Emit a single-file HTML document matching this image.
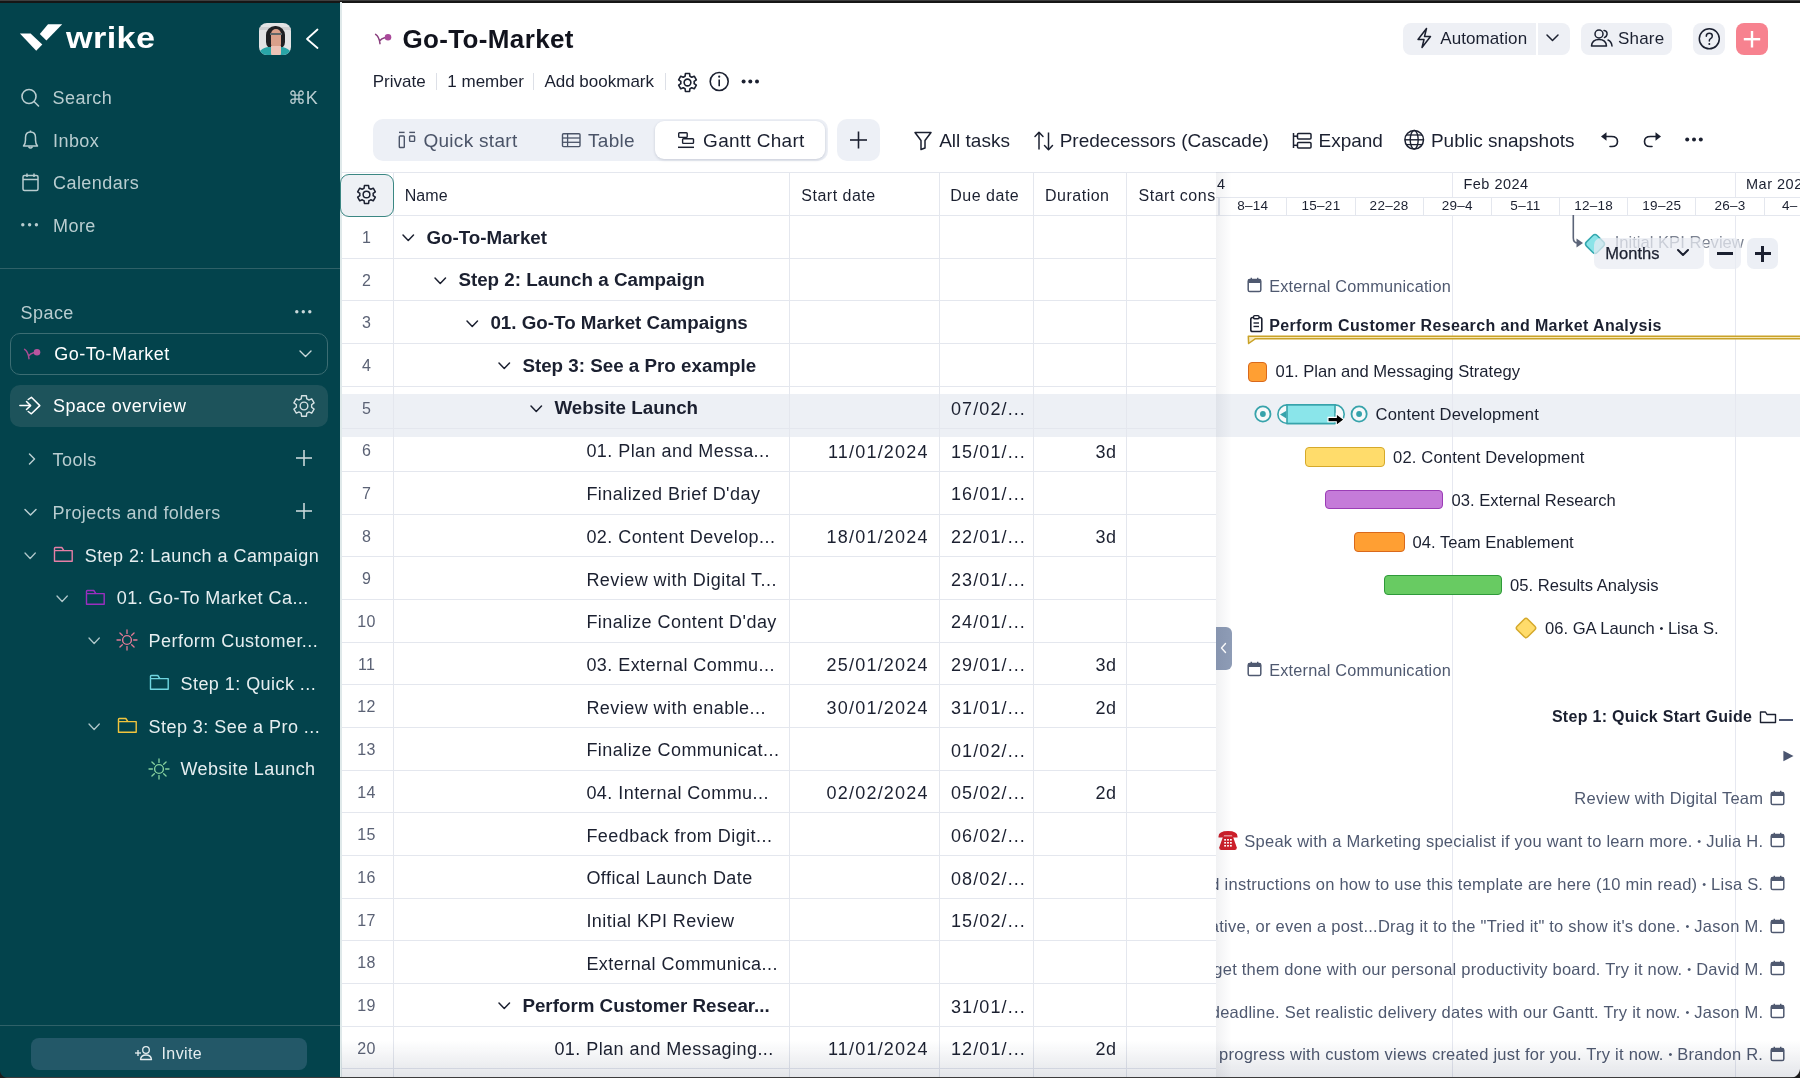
<!DOCTYPE html><html><head><meta charset="utf-8"><style>
html,body{margin:0;padding:0;width:1800px;height:1078px;overflow:hidden;background:#fff;font-family:"Liberation Sans",sans-serif;}
.t{position:absolute;white-space:nowrap;}
.r{position:absolute;}
svg.r{overflow:visible}
</style></head><body>
<div class="r" style="left:0px;top:0px;width:1800px;height:1078px;background:#ffffff;"></div>
<div class="r" style="left:0px;top:0px;width:340px;height:1078px;background:#03434c;"></div>
<div class="r" style="left:0px;top:0px;width:1800px;height:1px;background:#3f3f3f;"></div>
<div class="r" style="left:0px;top:1px;width:1800px;height:1.5px;background:#161616;"></div>
<svg class="r" style="left:0px;top:0px;" width="160" height="60" viewBox="0 0 160 60"><polygon points="19.9,33.5 30.6,33.5 42.3,44.5 36.2,50.8" fill="#fff"/>
<polygon points="39.8,34 48,24.3 62.2,24.3 46.4,40.6" fill="#fff"/></svg>
<div class="t " style="left:66.3px;top:23.75px;font-size:29px;line-height:29px;color:#ffffff;font-weight:700;letter-spacing:0.3px;transform:scaleX(1.18);transform-origin:0 0;">wrike</div>
<div class="r" style="left:259px;top:22.5px;width:32px;height:32.2px;border-radius:8px;overflow:hidden;background:#e3e3e4">
<div class="r" style="left:0;top:4px;width:32px;height:3px;background:#cfcfd1"></div>
<div class="r" style="left:6.5px;top:3px;width:19px;height:23px;border-radius:9px 9px 7px 7px;background:#1f1f22"></div>
<div class="r" style="left:12px;top:6.5px;width:9.5px;height:19px;border-radius:5px 5px 4px 4px;background:#d9a08a"></div>
<div class="r" style="left:11px;top:10.3px;width:11.5px;height:2.2px;background:#5f6668"></div>
<div class="r" style="left:-2px;top:24.5px;width:36px;height:12px;border-radius:12px 12px 0 0;background:#29a5a7"></div>
<div class="r" style="left:12px;top:23px;width:9.5px;height:10px;border-radius:0 0 3px 3px;background:#edc3b6"></div>
</div>
<svg class="r" style="left:300px;top:25px;" width="24" height="28" viewBox="0 0 24 28"><polyline points="17.5,4.5 7,14 17.5,23" fill="none" stroke="#fff" stroke-width="1.8" stroke-linecap="round" stroke-linejoin="round"/></svg>
<svg class="r" style="left:18px;top:86px;" width="24" height="24" viewBox="0 0 24 24"><circle cx="11" cy="10.5" r="7" fill="none" stroke="#b9cdd0" stroke-width="1.6"/><line x1="16" y1="15.5" x2="20.5" y2="20" stroke="#b9cdd0" stroke-width="1.6" stroke-linecap="round"/></svg>
<div class="t " style="left:52.5px;top:88.76px;font-size:18px;line-height:18px;color:#b9cdd0;letter-spacing:0.45px;">Search</div>
<div class="t " style="left:287.5px;top:88.76px;font-size:18px;line-height:18px;color:#b9cdd0;letter-spacing:0.2px;">&#8984;K</div>
<svg class="r" style="left:18px;top:128px;" width="24" height="24" viewBox="0 0 24 24"><path d="M5.5 18 Q7.5 16 7.5 12 L7.5 9.5 Q7.5 4 12.5 4 Q17.5 4 17.5 9.5 L17.5 12 Q17.5 16 19.5 18 Z" fill="none" stroke="#b9cdd0" stroke-width="1.5" stroke-linejoin="round"/><path d="M10.5 18.5 Q12.5 21.5 14.5 18.5" fill="none" stroke="#b9cdd0" stroke-width="1.5"/><line x1="12.5" y1="2.5" x2="12.5" y2="4" stroke="#b9cdd0" stroke-width="1.5"/></svg>
<div class="t " style="left:53px;top:131.76px;font-size:18px;line-height:18px;color:#b9cdd0;letter-spacing:0.45px;">Inbox</div>
<svg class="r" style="left:18px;top:170px;" width="24" height="24" viewBox="0 0 24 24"><rect x="5" y="5.5" width="15" height="15" rx="1.5" fill="none" stroke="#b9cdd0" stroke-width="1.5"/><line x1="5" y1="9.5" x2="20" y2="9.5" stroke="#b9cdd0" stroke-width="1.5"/><line x1="9" y1="3.5" x2="9" y2="7" stroke="#b9cdd0" stroke-width="1.5"/><line x1="16" y1="3.5" x2="16" y2="7" stroke="#b9cdd0" stroke-width="1.5"/></svg>
<div class="t " style="left:53px;top:174.36px;font-size:18px;line-height:18px;color:#b9cdd0;letter-spacing:0.45px;">Calendars</div>
<svg class="r" style="left:18px;top:213px;" width="24" height="24" viewBox="0 0 24 24"><circle cx="4.8" cy="11.7" r="1.7" fill="#b9cdd0"/><circle cx="11.6" cy="11.7" r="1.7" fill="#b9cdd0"/><circle cx="18.4" cy="11.7" r="1.7" fill="#b9cdd0"/></svg>
<div class="t " style="left:53px;top:216.76px;font-size:18px;line-height:18px;color:#b9cdd0;letter-spacing:0.45px;">More</div>
<div class="r" style="left:0px;top:268px;width:340px;height:1px;background:#2f6168;"></div>
<div class="t " style="left:20.5px;top:303.56px;font-size:18px;line-height:18px;color:#b9cdd0;letter-spacing:0.45px;">Space</div>
<svg class="r" style="left:290px;top:300px;" width="28" height="24" viewBox="0 0 28 24"><circle cx="6.8" cy="11.8" r="1.7" fill="#c9d8da"/><circle cx="13.3" cy="11.8" r="1.7" fill="#c9d8da"/><circle cx="19.8" cy="11.8" r="1.7" fill="#c9d8da"/></svg>
<div class="r" style="left:9.5px;top:332.5px;width:316px;height:40.5px;border:1px solid #3c6d73;border-radius:10px;"></div>
<svg class="r" style="left:21px;top:345px;" width="22" height="18" viewBox="0 0 22 18"><path d="M3.6 4.3 Q7.2 6.5 8 13.7 M7.8 10.8 Q9.5 8.6 12.6 7.8" fill="none" stroke="#a84d93" stroke-width="1.5" stroke-linecap="round"/><circle cx="16" cy="7.2" r="3.3" fill="#b9559f"/></svg>
<div class="t " style="left:54.3px;top:344.96px;font-size:18px;line-height:18px;color:#ffffff;letter-spacing:0.45px;">Go-To-Market</div>
<svg class="r" style="left:294px;top:344px;" width="24" height="20" viewBox="0 0 24 20"><polyline points="6,7 11.5,12.5 17,7" fill="none" stroke="#c9d8da" stroke-width="1.4" stroke-linecap="round" stroke-linejoin="round"/></svg>
<div class="r" style="left:9.5px;top:384.5px;width:318px;height:42px;background:#1d535b;border-radius:10px;"></div>
<svg class="r" style="left:14px;top:390px;" width="36" height="32" viewBox="0 0 36 32"><line x1="5.9" y1="15.6" x2="16.4" y2="15.6" stroke="#fff" stroke-width="1.5" stroke-linecap="round"/><polyline points="12.5,11.5 16.6,15.6 12.5,19.5" fill="none" stroke="#fff" stroke-width="1.5" stroke-linecap="round" stroke-linejoin="round"/><path d="M14.2 9.5 L17.4 7.3 L25.8 15.6 L17.4 23.8 L14.2 21.5" fill="none" stroke="#fff" stroke-width="1.5" stroke-linecap="round" stroke-linejoin="round"/></svg>
<div class="t " style="left:53px;top:397.06px;font-size:18px;line-height:18px;color:#ffffff;letter-spacing:0.45px;">Space overview</div>
<svg class="r" style="left:292px;top:394px;" width="24" height="24" viewBox="0 0 24 24"><path d="M9.25 4.83 L9.62 1.71 L14.38 1.71 L14.75 4.83 A7.68 7.68 0 0 1 16.83 6.03 L19.72 4.80 L22.10 8.91 L19.59 10.80 A7.68 7.68 0 0 1 19.59 13.20 L22.10 15.09 L19.72 19.20 L16.83 17.97 A7.68 7.68 0 0 1 14.75 19.17 L14.38 22.29 L9.62 22.29 L9.25 19.17 A7.68 7.68 0 0 1 7.17 17.97 L4.28 19.20 L1.90 15.09 L4.41 13.20 A7.68 7.68 0 0 1 4.41 10.80 L1.90 8.91 L4.28 4.80 L7.17 6.03 A7.68 7.68 0 0 1 9.25 4.83 Z" fill="none" stroke="#d5e1e3" stroke-width="1.4" stroke-linejoin="round"/><circle cx="12.0" cy="12.0" r="3.84" fill="none" stroke="#d5e1e3" stroke-width="1.4"/></svg>
<svg class="r" style="left:22px;top:449px;" width="20" height="20" viewBox="0 0 20 20"><polyline points="7.5,5 12.5,10 7.5,15" fill="none" stroke="#b9cdd0" stroke-width="1.5" stroke-linecap="round" stroke-linejoin="round"/></svg>
<div class="t " style="left:52.5px;top:450.76px;font-size:18px;line-height:18px;color:#b9cdd0;letter-spacing:0.45px;">Tools</div>
<svg class="r" style="left:291.5px;top:446px;" width="24" height="24" viewBox="0 0 24 24"><line x1="12" y1="4" x2="12" y2="20" stroke="#c9d8da" stroke-width="1.6"/><line x1="4" y1="12" x2="20" y2="12" stroke="#c9d8da" stroke-width="1.6"/></svg>
<svg class="r" style="left:20px;top:502px;" width="20" height="20" viewBox="0 0 20 20"><polyline points="5,7.5 10.5,13 16,7.5" fill="none" stroke="#b9cdd0" stroke-width="1.5" stroke-linecap="round" stroke-linejoin="round"/></svg>
<div class="t " style="left:52.5px;top:503.76px;font-size:18px;line-height:18px;color:#b9cdd0;letter-spacing:0.45px;">Projects and folders</div>
<svg class="r" style="left:291.5px;top:499px;" width="24" height="24" viewBox="0 0 24 24"><line x1="12" y1="4" x2="12" y2="20" stroke="#c9d8da" stroke-width="1.6"/><line x1="4" y1="12" x2="20" y2="12" stroke="#c9d8da" stroke-width="1.6"/></svg>
<svg class="r" style="left:24.3px;top:551.8px;" width="12.3" height="8" viewBox="0 0 12.3 8"><polyline points="1,1 6.15,6.5 11.3,1" fill="none" stroke="#b0c7ca" stroke-width="1.3" stroke-linecap="round" stroke-linejoin="round"/></svg>
<svg class="r" style="left:52.6px;top:546px;" width="22" height="18" viewBox="0 0 22 18"><path d="M1.5 4.6 L19.2 4.6 L19.2 15.2 L1.5 15.2 Z" fill="none" stroke="#e77fa6" stroke-width="1.4" stroke-linejoin="round"/><path d="M1.5 4.6 L1.5 2.3 Q1.5 1.5 2.3 1.5 L8.8 1.5 L10.9 4.6" fill="none" stroke="#e77fa6" stroke-width="1.4" stroke-linejoin="round"/></svg>
<div class="t " style="left:84.7px;top:546.76px;font-size:18px;line-height:18px;color:#e6eef0;letter-spacing:0.45px;">Step 2: Launch a Campaign</div>
<svg class="r" style="left:56.3px;top:594.5px;" width="12.3" height="8" viewBox="0 0 12.3 8"><polyline points="1,1 6.15,6.5 11.3,1" fill="none" stroke="#b0c7ca" stroke-width="1.3" stroke-linecap="round" stroke-linejoin="round"/></svg>
<svg class="r" style="left:85.2px;top:588.7px;" width="22" height="18" viewBox="0 0 22 18"><path d="M1.5 4.6 L19.2 4.6 L19.2 15.2 L1.5 15.2 Z" fill="none" stroke="#9b2fc0" stroke-width="1.4" stroke-linejoin="round"/><path d="M1.5 4.6 L1.5 2.3 Q1.5 1.5 2.3 1.5 L8.8 1.5 L10.9 4.6" fill="none" stroke="#9b2fc0" stroke-width="1.4" stroke-linejoin="round"/></svg>
<div class="t " style="left:116.8px;top:589.46px;font-size:18px;line-height:18px;color:#e6eef0;letter-spacing:0.45px;">01. Go-To Market Ca...</div>
<svg class="r" style="left:88.3px;top:637.1999999999999px;" width="12.3" height="8" viewBox="0 0 12.3 8"><polyline points="1,1 6.15,6.5 11.3,1" fill="none" stroke="#b0c7ca" stroke-width="1.3" stroke-linecap="round" stroke-linejoin="round"/></svg>
<svg class="r" style="left:115.8px;top:629.4px;" width="22" height="22" viewBox="0 0 22 22"><circle cx="11" cy="11" r="4.4" fill="none" stroke="#e27a95" stroke-width="1.4"/><line x1="17.60" y1="11.00" x2="21.00" y2="11.00" stroke="#e27a95" stroke-width="1.3" stroke-linecap="round"/><line x1="15.67" y1="15.67" x2="18.07" y2="18.07" stroke="#e27a95" stroke-width="1.3" stroke-linecap="round"/><line x1="11.00" y1="17.60" x2="11.00" y2="21.00" stroke="#e27a95" stroke-width="1.3" stroke-linecap="round"/><line x1="6.33" y1="15.67" x2="3.93" y2="18.07" stroke="#e27a95" stroke-width="1.3" stroke-linecap="round"/><line x1="4.40" y1="11.00" x2="1.00" y2="11.00" stroke="#e27a95" stroke-width="1.3" stroke-linecap="round"/><line x1="6.33" y1="6.33" x2="3.93" y2="3.93" stroke="#e27a95" stroke-width="1.3" stroke-linecap="round"/><line x1="11.00" y1="4.40" x2="11.00" y2="1.00" stroke="#e27a95" stroke-width="1.3" stroke-linecap="round"/><line x1="15.67" y1="6.33" x2="18.07" y2="3.93" stroke="#e27a95" stroke-width="1.3" stroke-linecap="round"/></svg>
<div class="t " style="left:148.6px;top:632.16px;font-size:18px;line-height:18px;color:#e6eef0;letter-spacing:0.45px;">Perform Customer...</div>
<svg class="r" style="left:149px;top:674.1px;" width="22" height="18" viewBox="0 0 22 18"><path d="M1.5 4.6 L19.2 4.6 L19.2 15.2 L1.5 15.2 Z" fill="none" stroke="#6fd6e0" stroke-width="1.4" stroke-linejoin="round"/><path d="M1.5 4.6 L1.5 2.3 Q1.5 1.5 2.3 1.5 L8.8 1.5 L10.9 4.6" fill="none" stroke="#6fd6e0" stroke-width="1.4" stroke-linejoin="round"/></svg>
<div class="t " style="left:180.5px;top:674.86px;font-size:18px;line-height:18px;color:#e6eef0;letter-spacing:0.45px;">Step 1: Quick ...</div>
<svg class="r" style="left:88.3px;top:722.5999999999999px;" width="12.3" height="8" viewBox="0 0 12.3 8"><polyline points="1,1 6.15,6.5 11.3,1" fill="none" stroke="#b0c7ca" stroke-width="1.3" stroke-linecap="round" stroke-linejoin="round"/></svg>
<svg class="r" style="left:117px;top:716.8px;" width="22" height="18" viewBox="0 0 22 18"><path d="M1.5 4.6 L19.2 4.6 L19.2 15.2 L1.5 15.2 Z" fill="none" stroke="#f2c53d" stroke-width="1.4" stroke-linejoin="round"/><path d="M1.5 4.6 L1.5 2.3 Q1.5 1.5 2.3 1.5 L8.8 1.5 L10.9 4.6" fill="none" stroke="#f2c53d" stroke-width="1.4" stroke-linejoin="round"/></svg>
<div class="t " style="left:148.6px;top:717.56px;font-size:18px;line-height:18px;color:#e6eef0;letter-spacing:0.45px;">Step 3: See a Pro ...</div>
<svg class="r" style="left:148px;top:757.5px;" width="22" height="22" viewBox="0 0 22 22"><circle cx="11" cy="11" r="4.4" fill="none" stroke="#86d19e" stroke-width="1.4"/><line x1="17.60" y1="11.00" x2="21.00" y2="11.00" stroke="#86d19e" stroke-width="1.3" stroke-linecap="round"/><line x1="15.67" y1="15.67" x2="18.07" y2="18.07" stroke="#86d19e" stroke-width="1.3" stroke-linecap="round"/><line x1="11.00" y1="17.60" x2="11.00" y2="21.00" stroke="#86d19e" stroke-width="1.3" stroke-linecap="round"/><line x1="6.33" y1="15.67" x2="3.93" y2="18.07" stroke="#86d19e" stroke-width="1.3" stroke-linecap="round"/><line x1="4.40" y1="11.00" x2="1.00" y2="11.00" stroke="#86d19e" stroke-width="1.3" stroke-linecap="round"/><line x1="6.33" y1="6.33" x2="3.93" y2="3.93" stroke="#86d19e" stroke-width="1.3" stroke-linecap="round"/><line x1="11.00" y1="4.40" x2="11.00" y2="1.00" stroke="#86d19e" stroke-width="1.3" stroke-linecap="round"/><line x1="15.67" y1="6.33" x2="18.07" y2="3.93" stroke="#86d19e" stroke-width="1.3" stroke-linecap="round"/></svg>
<div class="t " style="left:180.5px;top:760.26px;font-size:18px;line-height:18px;color:#e6eef0;letter-spacing:0.45px;">Website Launch</div>
<div class="r" style="left:0px;top:1025px;width:340px;height:1px;background:#2f6168;"></div>
<div class="r" style="left:30.5px;top:1038px;width:276.5px;height:31.5px;background:#235868;border-radius:8px;"></div>
<svg class="r" style="left:133px;top:1043px;" width="22" height="20" viewBox="0 0 22 20"><line x1="2" y1="10" x2="8" y2="10" stroke="#e6eef0" stroke-width="1.3"/><line x1="5" y1="7" x2="5" y2="13" stroke="#e6eef0" stroke-width="1.3"/><circle cx="13" cy="7" r="3.3" fill="none" stroke="#e6eef0" stroke-width="1.3"/><path d="M7.5 16.5 Q8 12 13 12 Q18 12 18.5 16.5 Z" fill="none" stroke="#e6eef0" stroke-width="1.3" stroke-linejoin="round"/></svg>
<div class="t " style="left:161.5px;top:1045.76px;font-size:16px;line-height:16px;color:#e6eef0;letter-spacing:0.4px;">Invite</div>
<svg class="r" style="left:372px;top:30px;" width="22" height="18" viewBox="0 0 22 18"><path d="M3.6 4.3 Q7.2 6.5 8 13.7 M7.8 10.8 Q9.5 8.6 12.6 7.8" fill="none" stroke="#8a3f7e" stroke-width="1.5" stroke-linecap="round"/><circle cx="16" cy="7.2" r="3.3" fill="#a9499a"/></svg>
<div class="t " style="left:402.5px;top:26.19px;font-size:26px;line-height:26px;color:#11131d;font-weight:700;letter-spacing:0.35px;">Go-To-Market</div>
<div class="t " style="left:372.7px;top:72.71px;font-size:17px;line-height:17px;color:#1b2030;">Private</div>
<div class="r" style="left:435.5px;top:73px;width:1px;height:16.5px;background:#dde0e7;"></div>
<div class="t " style="left:447.3px;top:72.71px;font-size:17px;line-height:17px;color:#1b2030;">1 member</div>
<div class="r" style="left:532.5px;top:73px;width:1px;height:16.5px;background:#dde0e7;"></div>
<div class="t " style="left:544.4px;top:72.71px;font-size:17px;line-height:17px;color:#1b2030;">Add bookmark</div>
<div class="r" style="left:664.5px;top:73px;width:1px;height:16.5px;background:#dde0e7;"></div>
<svg class="r" style="left:677px;top:71.5px;" width="21" height="21" viewBox="0 0 21 21"><path d="M8.09 4.23 L8.42 1.50 L12.58 1.50 L12.91 4.23 A6.72 6.72 0 0 1 14.73 5.28 L17.26 4.20 L19.34 7.80 L17.14 9.45 A6.72 6.72 0 0 1 17.14 11.55 L19.34 13.20 L17.26 16.80 L14.73 15.72 A6.72 6.72 0 0 1 12.91 16.77 L12.58 19.50 L8.42 19.50 L8.09 16.77 A6.72 6.72 0 0 1 6.27 15.72 L3.74 16.80 L1.66 13.20 L3.86 11.55 A6.72 6.72 0 0 1 3.86 9.45 L1.66 7.80 L3.74 4.20 L6.27 5.28 A6.72 6.72 0 0 1 8.09 4.23 Z" fill="none" stroke="#1b2030" stroke-width="1.6" stroke-linejoin="round"/><circle cx="10.5" cy="10.5" r="3.36" fill="none" stroke="#1b2030" stroke-width="1.6"/></svg>
<svg class="r" style="left:708px;top:70px;" width="23" height="23" viewBox="0 0 23 23"><circle cx="11.2" cy="11.5" r="9" fill="none" stroke="#1b2030" stroke-width="1.6"/><line x1="11.2" y1="9.5" x2="11.2" y2="16.2" stroke="#1b2030" stroke-width="1.6"/><circle cx="11.2" cy="6.7" r="1.1" fill="#1b2030"/></svg>
<svg class="r" style="left:739px;top:72px;" width="24" height="20" viewBox="0 0 24 20"><circle cx="4.6" cy="9.5" r="2" fill="#1b2030"/><circle cx="11.3" cy="9.5" r="2" fill="#1b2030"/><circle cx="18" cy="9.5" r="2" fill="#1b2030"/></svg>
<div class="r" style="left:1402.5px;top:22.5px;width:167px;height:32.5px;background:#eef0f5;border-radius:8px;"></div>
<div class="r" style="left:1536px;top:22.5px;width:2px;height:32.5px;background:#ffffff;"></div>
<svg class="r" style="left:1413px;top:26px;" width="22" height="24" viewBox="0 0 22 24"><path d="M13.5 2.5 L5 13.5 L11 13.5 L9 21.5 L17.5 10.5 L11.5 10.5 Z" fill="none" stroke="#1b2030" stroke-width="1.5" stroke-linejoin="round"/></svg>
<div class="t " style="left:1440.2px;top:29.91px;font-size:17px;line-height:17px;color:#1b2030;letter-spacing:0.1px;">Automation</div>
<svg class="r" style="left:1545px;top:33px;" width="16" height="10" viewBox="0 0 16 10"><polyline points="2,2 7.5,7.5 13,2" fill="none" stroke="#1b2030" stroke-width="1.5" stroke-linecap="round" stroke-linejoin="round"/></svg>
<div class="r" style="left:1580.5px;top:22.5px;width:91px;height:32.5px;background:#eef0f5;border-radius:8px;"></div>
<svg class="r" style="left:1589px;top:27px;" width="26" height="22" viewBox="0 0 26 22"><circle cx="10" cy="7" r="4" fill="none" stroke="#1b2030" stroke-width="1.5"/><path d="M2.5 19 Q3 12.5 10 12.5 Q17 12.5 17.5 19 Z" fill="none" stroke="#1b2030" stroke-width="1.5" stroke-linejoin="round"/><path d="M15 3.5 Q18.5 4 18 7.5 Q17.5 10 15.5 10.5 M19 13 Q22.5 14.5 23 19" fill="none" stroke="#1b2030" stroke-width="1.5" stroke-linecap="round"/></svg>
<div class="t " style="left:1618px;top:29.91px;font-size:17px;line-height:17px;color:#1b2030;letter-spacing:0.2px;">Share</div>
<div class="r" style="left:1693px;top:22.5px;width:32px;height:32.5px;background:#eef0f5;border-radius:8px;"></div>
<svg class="r" style="left:1697px;top:27px;" width="24" height="24" viewBox="0 0 24 24"><circle cx="12.3" cy="11.8" r="10" fill="none" stroke="#1b2030" stroke-width="1.5"/><path d="M9.3 9.3 Q9.3 6.3 12.3 6.3 Q15.3 6.3 15.3 9 Q15.3 10.8 13.3 11.8 Q12.3 12.4 12.3 14" fill="none" stroke="#1b2030" stroke-width="1.5" stroke-linecap="round"/><circle cx="12.3" cy="17" r="1" fill="#1b2030"/></svg>
<div class="r" style="left:1736px;top:22.5px;width:32px;height:32.5px;background:#f7828f;border-radius:8px;"></div>
<svg class="r" style="left:1736px;top:22.5px;" width="32" height="32.5" viewBox="0 0 32 32.5"><line x1="16" y1="8" x2="16" y2="24.5" stroke="#fff" stroke-width="2.4"/><line x1="7.8" y1="16.2" x2="24.2" y2="16.2" stroke="#fff" stroke-width="2.4"/></svg>
<div class="r" style="left:373px;top:119px;width:455px;height:42px;background:#edf0f6;border-radius:10px;"></div>
<div class="r" style="left:655px;top:121.3px;width:170px;height:37.5px;background:#ffffff;border-radius:9px;box-shadow:0 1px 3px rgba(30,40,70,0.18);"></div>
<svg class="r" style="left:396px;top:129px;" width="22" height="22" viewBox="0 0 22 22"><line x1="3" y1="3.4" x2="8.6" y2="3.4" stroke="#4b5468" stroke-width="1.4"/><line x1="13.3" y1="3.4" x2="19" y2="3.4" stroke="#4b5468" stroke-width="1.4"/><rect x="3.3" y="7" width="5" height="11.5" rx="0.8" fill="none" stroke="#4b5468" stroke-width="1.4"/><rect x="13.6" y="7" width="5" height="5.4" rx="0.8" fill="none" stroke="#4b5468" stroke-width="1.4"/></svg>
<div class="t " style="left:423.4px;top:131.12px;font-size:19px;line-height:19px;color:#4b5468;letter-spacing:0.3px;">Quick start</div>
<svg class="r" style="left:560px;top:131px;" width="22" height="18" viewBox="0 0 22 18"><rect x="2.5" y="2.8" width="17.5" height="12.8" rx="1" fill="none" stroke="#4b5468" stroke-width="1.4"/><line x1="2.5" y1="7" x2="20" y2="7" stroke="#4b5468" stroke-width="1.3"/><line x1="2.5" y1="11.3" x2="20" y2="11.3" stroke="#4b5468" stroke-width="1.3"/><line x1="7.6" y1="2.8" x2="7.6" y2="15.6" stroke="#4b5468" stroke-width="1.3"/></svg>
<div class="t " style="left:588px;top:131.12px;font-size:19px;line-height:19px;color:#4b5468;letter-spacing:0.3px;">Table</div>
<svg class="r" style="left:676px;top:130px;" width="20" height="20" viewBox="0 0 20 20"><rect x="2.7" y="2.8" width="8.5" height="4.6" rx="0.8" fill="none" stroke="#1b2030" stroke-width="1.4"/><rect x="6.6" y="8.8" width="10.9" height="4.6" rx="0.8" fill="none" stroke="#1b2030" stroke-width="1.4"/><line x1="2" y1="17.3" x2="18" y2="17.3" stroke="#1b2030" stroke-width="1.5"/></svg>
<div class="t " style="left:703.1px;top:131.12px;font-size:19px;line-height:19px;color:#1b2030;letter-spacing:0.3px;">Gantt Chart</div>
<div class="r" style="left:837px;top:119px;width:43px;height:42px;background:#edf0f6;border-radius:10px;"></div>
<svg class="r" style="left:837px;top:119px;" width="43" height="42" viewBox="0 0 43 42"><line x1="21.5" y1="12.5" x2="21.5" y2="29.5" stroke="#1b2030" stroke-width="1.6"/><line x1="13" y1="21" x2="30" y2="21" stroke="#1b2030" stroke-width="1.6"/></svg>
<svg class="r" style="left:912px;top:130px;" width="22" height="22" viewBox="0 0 22 22"><path d="M3 2.5 L19 2.5 L13 10.5 L13 18 L9 19.5 L9 10.5 Z" fill="none" stroke="#1b2030" stroke-width="1.5" stroke-linejoin="round"/></svg>
<div class="t " style="left:939.2px;top:130.92px;font-size:19px;line-height:19px;color:#1b2030;">All tasks</div>
<svg class="r" style="left:1032px;top:129px;" width="24" height="24" viewBox="0 0 24 24"><line x1="7" y1="3.5" x2="7" y2="20.5" stroke="#1b2030" stroke-width="1.5"/><polyline points="3,7.5 7,3.3 11,7.5" fill="none" stroke="#1b2030" stroke-width="1.5" stroke-linejoin="round" stroke-linecap="round"/><line x1="16.5" y1="3.5" x2="16.5" y2="20.5" stroke="#1b2030" stroke-width="1.5"/><polyline points="12.5,16.5 16.5,20.7 20.5,16.5" fill="none" stroke="#1b2030" stroke-width="1.5" stroke-linejoin="round" stroke-linecap="round"/></svg>
<div class="t " style="left:1059.7px;top:130.92px;font-size:19px;line-height:19px;color:#1b2030;">Predecessors (Cascade)</div>
<svg class="r" style="left:1290px;top:129px;" width="24" height="24" viewBox="0 0 24 24"><line x1="3.5" y1="4" x2="3.5" y2="19" stroke="#1b2030" stroke-width="1.5"/><rect x="7.5" y="4.5" width="13.5" height="5.5" rx="1" fill="none" stroke="#1b2030" stroke-width="1.5"/><rect x="7.5" y="13.5" width="13.5" height="5.5" rx="1" fill="none" stroke="#1b2030" stroke-width="1.5"/><line x1="3.5" y1="7.2" x2="7.5" y2="7.2" stroke="#1b2030" stroke-width="1.5"/><line x1="3.5" y1="16.3" x2="7.5" y2="16.3" stroke="#1b2030" stroke-width="1.5"/></svg>
<div class="t " style="left:1318.5px;top:130.92px;font-size:19px;line-height:19px;color:#1b2030;">Expand</div>
<svg class="r" style="left:1402px;top:128px;" width="24" height="24" viewBox="0 0 24 24"><circle cx="12.2" cy="11.8" r="9.3" fill="none" stroke="#1b2030" stroke-width="1.5"/><ellipse cx="12.2" cy="11.8" rx="4" ry="9.3" fill="none" stroke="#1b2030" stroke-width="1.4"/><line x1="2.9" y1="11.8" x2="21.5" y2="11.8" stroke="#1b2030" stroke-width="1.4"/><line x1="4.2" y1="7" x2="20.2" y2="7" stroke="#1b2030" stroke-width="1.3"/><line x1="4.2" y1="16.6" x2="20.2" y2="16.6" stroke="#1b2030" stroke-width="1.3"/></svg>
<div class="t " style="left:1430.9px;top:130.92px;font-size:19px;line-height:19px;color:#1b2030;">Public snapshots</div>
<svg class="r" style="left:1598px;top:128px;" width="24" height="24" viewBox="0 0 24 24"><path d="M7 8.5 L13.5 8.5 Q19.5 8.5 19.5 13.5 Q19.5 18.5 14 18.5 L12 18.5" fill="none" stroke="#1b2030" stroke-width="1.6" stroke-linecap="round"/><polygon points="3,8.5 8.5,4.3 8.5,12.7" fill="#1b2030"/></svg>
<svg class="r" style="left:1640px;top:128px;" width="24" height="24" viewBox="0 0 24 24"><path d="M17 8.5 L10.5 8.5 Q4.5 8.5 4.5 13.5 Q4.5 18.5 10 18.5 L12 18.5" fill="none" stroke="#1b2030" stroke-width="1.6" stroke-linecap="round"/><polygon points="21,8.5 15.5,4.3 15.5,12.7" fill="#1b2030"/></svg>
<svg class="r" style="left:1683px;top:128px;" width="24" height="24" viewBox="0 0 24 24"><circle cx="4.2" cy="11.5" r="2" fill="#1b2030"/><circle cx="11" cy="11.5" r="2" fill="#1b2030"/><circle cx="17.8" cy="11.5" r="2" fill="#1b2030"/></svg>
<div class="r" style="left:340px;top:393.5px;width:1460px;height:43.2px;background:#edf0f5;"></div>
<div class="r" style="left:340px;top:172px;width:1460px;height:1px;background:#e4e7ee;"></div>
<div class="r" style="left:340px;top:215px;width:876px;height:1px;background:#e4e7ee;"></div>
<div class="r" style="left:340px;top:258px;width:876px;height:1px;background:#e4e7ee;"></div>
<div class="r" style="left:340px;top:300px;width:876px;height:1px;background:#e4e7ee;"></div>
<div class="r" style="left:340px;top:343px;width:876px;height:1px;background:#e4e7ee;"></div>
<div class="r" style="left:340px;top:386px;width:876px;height:1px;background:#e4e7ee;"></div>
<div class="r" style="left:340px;top:428px;width:876px;height:1px;background:#e4e7ee;"></div>
<div class="r" style="left:340px;top:471px;width:876px;height:1px;background:#e4e7ee;"></div>
<div class="r" style="left:340px;top:514px;width:876px;height:1px;background:#e4e7ee;"></div>
<div class="r" style="left:340px;top:556px;width:876px;height:1px;background:#e4e7ee;"></div>
<div class="r" style="left:340px;top:599px;width:876px;height:1px;background:#e4e7ee;"></div>
<div class="r" style="left:340px;top:642px;width:876px;height:1px;background:#e4e7ee;"></div>
<div class="r" style="left:340px;top:684px;width:876px;height:1px;background:#e4e7ee;"></div>
<div class="r" style="left:340px;top:727px;width:876px;height:1px;background:#e4e7ee;"></div>
<div class="r" style="left:340px;top:770px;width:876px;height:1px;background:#e4e7ee;"></div>
<div class="r" style="left:340px;top:812px;width:876px;height:1px;background:#e4e7ee;"></div>
<div class="r" style="left:340px;top:855px;width:876px;height:1px;background:#e4e7ee;"></div>
<div class="r" style="left:340px;top:898px;width:876px;height:1px;background:#e4e7ee;"></div>
<div class="r" style="left:340px;top:940px;width:876px;height:1px;background:#e4e7ee;"></div>
<div class="r" style="left:340px;top:983px;width:876px;height:1px;background:#e4e7ee;"></div>
<div class="r" style="left:340px;top:1026px;width:876px;height:1px;background:#e4e7ee;"></div>
<div class="r" style="left:340px;top:1068px;width:876px;height:1px;background:#e4e7ee;"></div>
<div class="r" style="left:392.5px;top:172px;width:1px;height:906px;background:#e4e7ee;"></div>
<div class="r" style="left:789px;top:172px;width:1px;height:906px;background:#e4e7ee;"></div>
<div class="r" style="left:938.5px;top:172px;width:1px;height:906px;background:#e4e7ee;"></div>
<div class="r" style="left:1033px;top:172px;width:1px;height:906px;background:#e4e7ee;"></div>
<div class="r" style="left:1126px;top:172px;width:1px;height:906px;background:#e4e7ee;"></div>
<div class="r" style="left:340px;top:2px;width:1.5px;height:1076px;background:#dfe9ea;"></div>
<div class="r" style="left:340px;top:173.5px;width:52px;height:41px;border:1px solid #3b8783;border-radius:9px;background:#eef1f5;"></div>
<svg class="r" style="left:356px;top:184px;" width="21" height="21" viewBox="0 0 21 21"><path d="M8.09 4.23 L8.42 1.50 L12.58 1.50 L12.91 4.23 A6.72 6.72 0 0 1 14.73 5.28 L17.26 4.20 L19.34 7.80 L17.14 9.45 A6.72 6.72 0 0 1 17.14 11.55 L19.34 13.20 L17.26 16.80 L14.73 15.72 A6.72 6.72 0 0 1 12.91 16.77 L12.58 19.50 L8.42 19.50 L8.09 16.77 A6.72 6.72 0 0 1 6.27 15.72 L3.74 16.80 L1.66 13.20 L3.86 11.55 A6.72 6.72 0 0 1 3.86 9.45 L1.66 7.80 L3.74 4.20 L6.27 5.28 A6.72 6.72 0 0 1 8.09 4.23 Z" fill="none" stroke="#1b2030" stroke-width="1.5" stroke-linejoin="round"/><circle cx="10.5" cy="10.5" r="3.36" fill="none" stroke="#1b2030" stroke-width="1.5"/></svg>
<div class="t " style="left:404.7px;top:187.76px;font-size:16px;line-height:16px;color:#1b2030;letter-spacing:0.1px;">Name</div>
<div class="t " style="left:801.3px;top:187.76px;font-size:16px;line-height:16px;color:#1b2030;letter-spacing:0.5px;">Start date</div>
<div class="t " style="left:950.3px;top:187.76px;font-size:16px;line-height:16px;color:#1b2030;letter-spacing:0.5px;">Due date</div>
<div class="t " style="left:1045px;top:187.76px;font-size:16px;line-height:16px;color:#1b2030;letter-spacing:0.5px;">Duration</div>
<div class="r" style="left:1127px;top:173px;width:89px;height:42px;overflow:hidden">
<div class="t " style="left:11.6px;top:14.76px;font-size:16px;line-height:16px;color:#1b2030;letter-spacing:0.5px;">Start constraint</div>
</div>
<div class="t" style="left:340px;width:53px;text-align:center;top:229.89px;font-size:16px;line-height:16px;color:#5b6275;letter-spacing:0.3px">1</div>
<svg class="r" style="left:402.1px;top:234.3375px;" width="12.5" height="8" viewBox="0 0 12.5 8"><polyline points="1,1 6.25,6.5 11.5,1" fill="none" stroke="#1b2030" stroke-width="1.5" stroke-linecap="round" stroke-linejoin="round"/></svg>
<div class="t " style="left:426.4px;top:228.72px;font-size:18.8px;line-height:18.8px;color:#1b2030;font-weight:700;">Go-To-Market</div>
<div class="t" style="left:340px;width:53px;text-align:center;top:272.57px;font-size:16px;line-height:16px;color:#5b6275;letter-spacing:0.3px">2</div>
<svg class="r" style="left:434.1px;top:277.0125px;" width="12.5" height="8" viewBox="0 0 12.5 8"><polyline points="1,1 6.25,6.5 11.5,1" fill="none" stroke="#1b2030" stroke-width="1.5" stroke-linecap="round" stroke-linejoin="round"/></svg>
<div class="t " style="left:458.4px;top:271.40px;font-size:18.8px;line-height:18.8px;color:#1b2030;font-weight:700;">Step 2: Launch a Campaign</div>
<div class="t" style="left:340px;width:53px;text-align:center;top:315.24px;font-size:16px;line-height:16px;color:#5b6275;letter-spacing:0.3px">3</div>
<svg class="r" style="left:466.1px;top:319.6875px;" width="12.5" height="8" viewBox="0 0 12.5 8"><polyline points="1,1 6.25,6.5 11.5,1" fill="none" stroke="#1b2030" stroke-width="1.5" stroke-linecap="round" stroke-linejoin="round"/></svg>
<div class="t " style="left:490.4px;top:314.07px;font-size:18.8px;line-height:18.8px;color:#1b2030;font-weight:700;">01. Go-To Market Campaigns</div>
<div class="t" style="left:340px;width:53px;text-align:center;top:357.92px;font-size:16px;line-height:16px;color:#5b6275;letter-spacing:0.3px">4</div>
<svg class="r" style="left:498.1px;top:362.36249999999995px;" width="12.5" height="8" viewBox="0 0 12.5 8"><polyline points="1,1 6.25,6.5 11.5,1" fill="none" stroke="#1b2030" stroke-width="1.5" stroke-linecap="round" stroke-linejoin="round"/></svg>
<div class="t " style="left:522.4px;top:356.75px;font-size:18.8px;line-height:18.8px;color:#1b2030;font-weight:700;">Step 3: See a Pro example</div>
<div class="t" style="left:340px;width:53px;text-align:center;top:400.59px;font-size:16px;line-height:16px;color:#5b6275;letter-spacing:0.3px">5</div>
<svg class="r" style="left:530.1px;top:405.0375px;" width="12.5" height="8" viewBox="0 0 12.5 8"><polyline points="1,1 6.25,6.5 11.5,1" fill="none" stroke="#1b2030" stroke-width="1.5" stroke-linecap="round" stroke-linejoin="round"/></svg>
<div class="t " style="left:554.4px;top:399.42px;font-size:18.8px;line-height:18.8px;color:#1b2030;font-weight:700;">Website Launch</div>
<div class="t " style="left:951px;top:400.10px;font-size:18px;line-height:18px;color:#1b2030;letter-spacing:1.1px;">07/02/...</div>
<div class="t" style="left:340px;width:53px;text-align:center;top:443.27px;font-size:16px;line-height:16px;color:#5b6275;letter-spacing:0.3px">6</div>
<div class="t " style="left:586.4px;top:442.48px;font-size:18px;line-height:18px;color:#1b2030;letter-spacing:0.45px;">01. Plan and Messa...</div>
<div class="t " style="right:871.3px;top:442.78px;font-size:18px;line-height:18px;color:#1b2030;letter-spacing:1.2px;">11/01/2024</div>
<div class="t " style="left:951px;top:442.78px;font-size:18px;line-height:18px;color:#1b2030;letter-spacing:1.1px;">15/01/...</div>
<div class="t " style="right:683.5px;top:442.78px;font-size:18px;line-height:18px;color:#1b2030;letter-spacing:0.5px;">3d</div>
<div class="t" style="left:340px;width:53px;text-align:center;top:485.94px;font-size:16px;line-height:16px;color:#5b6275;letter-spacing:0.3px">7</div>
<div class="t " style="left:586.4px;top:485.15px;font-size:18px;line-height:18px;color:#1b2030;letter-spacing:0.45px;">Finalized Brief D'day</div>
<div class="t " style="left:951px;top:485.45px;font-size:18px;line-height:18px;color:#1b2030;letter-spacing:1.1px;">16/01/...</div>
<div class="t" style="left:340px;width:53px;text-align:center;top:528.62px;font-size:16px;line-height:16px;color:#5b6275;letter-spacing:0.3px">8</div>
<div class="t " style="left:586.4px;top:527.83px;font-size:18px;line-height:18px;color:#1b2030;letter-spacing:0.45px;">02. Content Develop...</div>
<div class="t " style="right:871.3px;top:528.13px;font-size:18px;line-height:18px;color:#1b2030;letter-spacing:1.2px;">18/01/2024</div>
<div class="t " style="left:951px;top:528.13px;font-size:18px;line-height:18px;color:#1b2030;letter-spacing:1.1px;">22/01/...</div>
<div class="t " style="right:683.5px;top:528.13px;font-size:18px;line-height:18px;color:#1b2030;letter-spacing:0.5px;">3d</div>
<div class="t" style="left:340px;width:53px;text-align:center;top:571.29px;font-size:16px;line-height:16px;color:#5b6275;letter-spacing:0.3px">9</div>
<div class="t " style="left:586.4px;top:570.50px;font-size:18px;line-height:18px;color:#1b2030;letter-spacing:0.45px;">Review with Digital T...</div>
<div class="t " style="left:951px;top:570.80px;font-size:18px;line-height:18px;color:#1b2030;letter-spacing:1.1px;">23/01/...</div>
<div class="t" style="left:340px;width:53px;text-align:center;top:613.97px;font-size:16px;line-height:16px;color:#5b6275;letter-spacing:0.3px">10</div>
<div class="t " style="left:586.4px;top:613.18px;font-size:18px;line-height:18px;color:#1b2030;letter-spacing:0.45px;">Finalize Content D'day</div>
<div class="t " style="left:951px;top:613.48px;font-size:18px;line-height:18px;color:#1b2030;letter-spacing:1.1px;">24/01/...</div>
<div class="t" style="left:340px;width:53px;text-align:center;top:656.64px;font-size:16px;line-height:16px;color:#5b6275;letter-spacing:0.3px">11</div>
<div class="t " style="left:586.4px;top:655.85px;font-size:18px;line-height:18px;color:#1b2030;letter-spacing:0.45px;">03. External Commu...</div>
<div class="t " style="right:871.3px;top:656.15px;font-size:18px;line-height:18px;color:#1b2030;letter-spacing:1.2px;">25/01/2024</div>
<div class="t " style="left:951px;top:656.15px;font-size:18px;line-height:18px;color:#1b2030;letter-spacing:1.1px;">29/01/...</div>
<div class="t " style="right:683.5px;top:656.15px;font-size:18px;line-height:18px;color:#1b2030;letter-spacing:0.5px;">3d</div>
<div class="t" style="left:340px;width:53px;text-align:center;top:699.32px;font-size:16px;line-height:16px;color:#5b6275;letter-spacing:0.3px">12</div>
<div class="t " style="left:586.4px;top:698.53px;font-size:18px;line-height:18px;color:#1b2030;letter-spacing:0.45px;">Review with enable...</div>
<div class="t " style="right:871.3px;top:698.83px;font-size:18px;line-height:18px;color:#1b2030;letter-spacing:1.2px;">30/01/2024</div>
<div class="t " style="left:951px;top:698.83px;font-size:18px;line-height:18px;color:#1b2030;letter-spacing:1.1px;">31/01/...</div>
<div class="t " style="right:683.5px;top:698.83px;font-size:18px;line-height:18px;color:#1b2030;letter-spacing:0.5px;">2d</div>
<div class="t" style="left:340px;width:53px;text-align:center;top:741.99px;font-size:16px;line-height:16px;color:#5b6275;letter-spacing:0.3px">13</div>
<div class="t " style="left:586.4px;top:741.20px;font-size:18px;line-height:18px;color:#1b2030;letter-spacing:0.45px;">Finalize Communicat...</div>
<div class="t " style="left:951px;top:741.50px;font-size:18px;line-height:18px;color:#1b2030;letter-spacing:1.1px;">01/02/...</div>
<div class="t" style="left:340px;width:53px;text-align:center;top:784.67px;font-size:16px;line-height:16px;color:#5b6275;letter-spacing:0.3px">14</div>
<div class="t " style="left:586.4px;top:783.88px;font-size:18px;line-height:18px;color:#1b2030;letter-spacing:0.45px;">04. Internal Commu...</div>
<div class="t " style="right:871.3px;top:784.18px;font-size:18px;line-height:18px;color:#1b2030;letter-spacing:1.2px;">02/02/2024</div>
<div class="t " style="left:951px;top:784.18px;font-size:18px;line-height:18px;color:#1b2030;letter-spacing:1.1px;">05/02/...</div>
<div class="t " style="right:683.5px;top:784.18px;font-size:18px;line-height:18px;color:#1b2030;letter-spacing:0.5px;">2d</div>
<div class="t" style="left:340px;width:53px;text-align:center;top:827.34px;font-size:16px;line-height:16px;color:#5b6275;letter-spacing:0.3px">15</div>
<div class="t " style="left:586.4px;top:826.55px;font-size:18px;line-height:18px;color:#1b2030;letter-spacing:0.45px;">Feedback from Digit...</div>
<div class="t " style="left:951px;top:826.85px;font-size:18px;line-height:18px;color:#1b2030;letter-spacing:1.1px;">06/02/...</div>
<div class="t" style="left:340px;width:53px;text-align:center;top:870.02px;font-size:16px;line-height:16px;color:#5b6275;letter-spacing:0.3px">16</div>
<div class="t " style="left:586.4px;top:869.23px;font-size:18px;line-height:18px;color:#1b2030;letter-spacing:0.45px;">Offical Launch Date</div>
<div class="t " style="left:951px;top:869.53px;font-size:18px;line-height:18px;color:#1b2030;letter-spacing:1.1px;">08/02/...</div>
<div class="t" style="left:340px;width:53px;text-align:center;top:912.69px;font-size:16px;line-height:16px;color:#5b6275;letter-spacing:0.3px">17</div>
<div class="t " style="left:586.4px;top:911.90px;font-size:18px;line-height:18px;color:#1b2030;letter-spacing:0.45px;">Initial KPI Review</div>
<div class="t " style="left:951px;top:912.20px;font-size:18px;line-height:18px;color:#1b2030;letter-spacing:1.1px;">15/02/...</div>
<div class="t" style="left:340px;width:53px;text-align:center;top:955.37px;font-size:16px;line-height:16px;color:#5b6275;letter-spacing:0.3px">18</div>
<div class="t " style="left:586.4px;top:954.58px;font-size:18px;line-height:18px;color:#1b2030;letter-spacing:0.45px;">External Communica...</div>
<div class="t" style="left:340px;width:53px;text-align:center;top:998.04px;font-size:16px;line-height:16px;color:#5b6275;letter-spacing:0.3px">19</div>
<svg class="r" style="left:498.1px;top:1002.4875px;" width="12.5" height="8" viewBox="0 0 12.5 8"><polyline points="1,1 6.25,6.5 11.5,1" fill="none" stroke="#1b2030" stroke-width="1.5" stroke-linecap="round" stroke-linejoin="round"/></svg>
<div class="t " style="left:522.4px;top:996.87px;font-size:18.8px;line-height:18.8px;color:#1b2030;font-weight:700;">Perform Customer Resear...</div>
<div class="t " style="left:951px;top:997.55px;font-size:18px;line-height:18px;color:#1b2030;letter-spacing:1.1px;">31/01/...</div>
<div class="t" style="left:340px;width:53px;text-align:center;top:1040.72px;font-size:16px;line-height:16px;color:#5b6275;letter-spacing:0.3px">20</div>
<div class="t " style="left:554.4px;top:1039.93px;font-size:18px;line-height:18px;color:#1b2030;letter-spacing:0.45px;">01. Plan and Messaging...</div>
<div class="t " style="right:871.3px;top:1040.23px;font-size:18px;line-height:18px;color:#1b2030;letter-spacing:1.2px;">11/01/2024</div>
<div class="t " style="left:951px;top:1040.23px;font-size:18px;line-height:18px;color:#1b2030;letter-spacing:1.1px;">12/01/...</div>
<div class="t " style="right:683.5px;top:1040.23px;font-size:18px;line-height:18px;color:#1b2030;letter-spacing:0.5px;">2d</div>
<div class="r" style="left:1216px;top:172px;width:584px;height:906px;background:#ffffff;"></div>
<div class="r" style="left:1216px;top:393.5px;width:584px;height:43.2px;background:#edf0f5;"></div>
<div class="r" style="left:1216px;top:172px;width:584px;height:1px;background:#e4e7ee;"></div>
<div class="r" style="left:1216px;top:196.5px;width:584px;height:1px;background:#e4e7ee;"></div>
<div class="r" style="left:1216px;top:215px;width:584px;height:1px;background:#e4e7ee;"></div>
<div class="r" style="left:1452px;top:172px;width:1px;height:25px;background:#e6e8f0;"></div>
<div class="r" style="left:1735px;top:172px;width:1px;height:25px;background:#e6e8f0;"></div>
<div class="r" style="left:1452px;top:215px;width:1px;height:863px;background:#e6e8f0;"></div>
<div class="r" style="left:1735px;top:215px;width:1px;height:863px;background:#e6e8f0;"></div>
<div class="r" style="left:1218.2px;top:196.5px;width:1.5px;height:19px;background:#e4e7ee;"></div>
<div class="r" style="left:1286.375px;top:196.5px;width:1px;height:19px;background:#e4e7ee;"></div>
<div class="r" style="left:1354.55px;top:196.5px;width:1px;height:19px;background:#e4e7ee;"></div>
<div class="r" style="left:1422.725px;top:196.5px;width:1px;height:19px;background:#e4e7ee;"></div>
<div class="r" style="left:1490.9px;top:196.5px;width:1px;height:19px;background:#e4e7ee;"></div>
<div class="r" style="left:1559.075px;top:196.5px;width:1px;height:19px;background:#e4e7ee;"></div>
<div class="r" style="left:1627.25px;top:196.5px;width:1px;height:19px;background:#e4e7ee;"></div>
<div class="r" style="left:1695.425px;top:196.5px;width:1px;height:19px;background:#e4e7ee;"></div>
<div class="r" style="left:1763.6px;top:196.5px;width:1px;height:19px;background:#e4e7ee;"></div>
<div class="t" style="left:1212.79px;width:80px;text-align:center;top:198.65px;font-size:13.5px;line-height:14px;color:#1b2030;letter-spacing:0.3px">8–14</div>
<div class="t" style="left:1280.96px;width:80px;text-align:center;top:198.65px;font-size:13.5px;line-height:14px;color:#1b2030;letter-spacing:0.3px">15–21</div>
<div class="t" style="left:1349.14px;width:80px;text-align:center;top:198.65px;font-size:13.5px;line-height:14px;color:#1b2030;letter-spacing:0.3px">22–28</div>
<div class="t" style="left:1417.31px;width:80px;text-align:center;top:198.65px;font-size:13.5px;line-height:14px;color:#1b2030;letter-spacing:0.3px">29–4</div>
<div class="t" style="left:1485.49px;width:80px;text-align:center;top:198.65px;font-size:13.5px;line-height:14px;color:#1b2030;letter-spacing:0.3px">5–11</div>
<div class="t" style="left:1553.66px;width:80px;text-align:center;top:198.65px;font-size:13.5px;line-height:14px;color:#1b2030;letter-spacing:0.3px">12–18</div>
<div class="t" style="left:1621.84px;width:80px;text-align:center;top:198.65px;font-size:13.5px;line-height:14px;color:#1b2030;letter-spacing:0.3px">19–25</div>
<div class="t" style="left:1690.01px;width:80px;text-align:center;top:198.65px;font-size:13.5px;line-height:14px;color:#1b2030;letter-spacing:0.3px">26–3</div>
<div class="t " style="left:1782.0px;top:199.07px;font-size:13.5px;line-height:13.5px;color:#1b2030;letter-spacing:0.3px;">4–</div>
<div class="r" style="left:1216px;top:172px;width:584px;height:25px;overflow:hidden">
<div class="t " style="left:-54px;top:5.03px;font-size:14.5px;line-height:14.5px;color:#1b2030;letter-spacing:0.5px;">Jan 2024</div>
<div class="t " style="left:247.4px;top:5.03px;font-size:14.5px;line-height:14.5px;color:#1b2030;letter-spacing:0.5px;">Feb 2024</div>
<div class="t " style="left:530px;top:5.03px;font-size:14.5px;line-height:14.5px;color:#1b2030;letter-spacing:0.5px;">Mar 2024</div>
</div>
<svg class="r" style="left:1560px;top:210px;" width="40" height="40" viewBox="0 0 40 40"><path d="M13.3 5 L13.3 28 Q13.3 33 18 33 L19 33" fill="none" stroke="#5b6478" stroke-width="1.6"/><polygon points="16.5,28.6 23,33 16.5,37.4" fill="#5b6478"/></svg>
<svg class="r" style="left:1582px;top:231px;" width="26" height="26" viewBox="0 0 26 26"><rect x="5.5" y="5.5" width="15" height="15" rx="3" transform="rotate(45 13 13)" fill="#8ae3e8" stroke="#33a7ae" stroke-width="1.5"/></svg>
<div class="t " style="left:1614.7px;top:235.25px;font-size:16.6px;line-height:16.6px;color:#7b8291;">Initial KPI Review</div>
<div class="r" style="left:1594px;top:237.7px;width:110px;height:31.3px;background:rgba(233,236,243,0.72);border-radius:7px;"></div>
<div class="t " style="left:1605.3px;top:245.03px;font-size:16.5px;line-height:16.5px;color:#1b2030;-webkit-text-stroke:0.25px #1b2030;">Months</div>
<svg class="r" style="left:1676px;top:248px;" width="14" height="10" viewBox="0 0 14 10"><polyline points="2,2 7,7 12,2" fill="none" stroke="#1b2030" stroke-width="2" stroke-linecap="round" stroke-linejoin="round"/></svg>
<div class="r" style="left:1709.3px;top:237.7px;width:31.4px;height:31.3px;background:rgba(233,236,243,0.72);border-radius:7px;"></div>
<div class="r" style="left:1717.3px;top:252.3px;width:16px;height:2.8px;background:#1b2030;"></div>
<div class="r" style="left:1746.7px;top:237.7px;width:31.4px;height:31.3px;background:rgba(233,236,243,0.85);border-radius:7px;"></div>
<div class="r" style="left:1754.7px;top:252.3px;width:16px;height:2.8px;background:#1b2030;"></div>
<div class="r" style="left:1761.3px;top:245.7px;width:2.8px;height:16px;background:#1b2030;"></div>
<svg class="r" style="left:1246.5px;top:276.5px;" width="16" height="16" viewBox="0 0 16 16"><rect x="1.2" y="2.6" width="12.6" height="12" rx="1.6" fill="none" stroke="#4f5970" stroke-width="1.5"/><rect x="1.2" y="2.6" width="12.6" height="3.4" rx="1" fill="#4f5970"/><line x1="4.3" y1="0.8" x2="4.3" y2="3" stroke="#4f5970" stroke-width="1.4"/><line x1="10.7" y1="0.8" x2="10.7" y2="3" stroke="#4f5970" stroke-width="1.4"/></svg>
<div class="t " style="left:1269.2px;top:278.20px;font-size:16.3px;line-height:16.3px;color:#4f5970;letter-spacing:0.2px;">External Communication</div>
<svg class="r" style="left:1249px;top:314px;" width="16" height="20" viewBox="0 0 16 20"><rect x="1.8" y="3.5" width="11" height="14" rx="1.8" fill="none" stroke="#1b2030" stroke-width="1.6"/><rect x="4.6" y="1.6" width="5.4" height="3.2" rx="1" fill="#fff" stroke="#1b2030" stroke-width="1.4"/><line x1="4.5" y1="9" x2="10" y2="9" stroke="#1b2030" stroke-width="1.4"/><line x1="4.5" y1="12.5" x2="10" y2="12.5" stroke="#1b2030" stroke-width="1.4"/></svg>
<div class="t " style="left:1269.2px;top:318.06px;font-size:16px;line-height:16px;color:#1b2030;font-weight:700;letter-spacing:0.38px;">Perform Customer Research and Market Analysis</div>
<svg class="r" style="left:1240px;top:330px;" width="560" height="20" viewBox="0 0 560 20"><path d="M8.3 6.3 L570 6.3 L570 8.7 L15.5 8.7 L8.6 13.5 Z" fill="#f6e7b6" stroke="#c9a227" stroke-width="1.5" stroke-linejoin="round"/></svg>
<div class="r" style="left:1247.7px;top:361.525px;width:19.799999999999955px;height:20px;background:#ff9f33;box-sizing:border-box;border:1.5px solid #d9691c;border-radius:4px;"></div>
<div class="t " style="left:1275.5px;top:363.95px;font-size:16.6px;line-height:16.6px;color:#1b2030;">01. Plan and Messaging Strategy</div>
<svg class="r" style="left:1250px;top:400px;" width="125" height="30" viewBox="0 0 125 30"><circle cx="12.9" cy="14" r="7.6" fill="#f7f9fa" stroke="#37a3ab" stroke-width="1.8"/><circle cx="12.9" cy="14" r="2.9" fill="#37a3ab"/><rect x="27.9" y="4.9" width="66.3" height="18.6" rx="9.3" fill="#f7f9fa" stroke="#37a3ab" stroke-width="1.6"/><rect x="37" y="4.9" width="48" height="18.6" fill="#8ae5ea" stroke="#37a3ab" stroke-width="1.6"/><polygon points="30,14.6 36.4,10.8 36.4,18.4" fill="#37a3ab"/><circle cx="109.1" cy="14" r="7.6" fill="#f7f9fa" stroke="#37a3ab" stroke-width="1.8"/><circle cx="109.1" cy="14" r="2.9" fill="#37a3ab"/><path d="M78 17.4 L86.3 17.4 L86.3 13.8 L94 19.6 L86.3 25.4 L86.3 21.8 L78 21.8 Z" fill="#000" stroke="#fff" stroke-width="1.1" stroke-linejoin="miter"/></svg>
<div class="t " style="left:1375.6px;top:406.95px;font-size:16.6px;line-height:16.6px;color:#1b2030;letter-spacing:0.15px;">Content Development</div>
<div class="r" style="left:1305px;top:447.125px;width:79.79999999999995px;height:19.5px;background:#ffdc6b;box-sizing:border-box;border:1.5px solid #d5a92b;border-radius:4px;"></div>
<div class="t " style="left:1393px;top:449.82px;font-size:16.6px;line-height:16.6px;color:#1b2030;letter-spacing:0.15px;">02. Content Development</div>
<div class="r" style="left:1324.8px;top:489.79999999999995px;width:118.60000000000014px;height:19.5px;background:#c57bd9;box-sizing:border-box;border:1.5px solid #9b3db6;border-radius:4px;"></div>
<div class="t " style="left:1451.6px;top:492.50px;font-size:16.6px;line-height:16.6px;color:#1b2030;">03. External Research</div>
<div class="r" style="left:1354.3px;top:532.4749999999999px;width:50.700000000000045px;height:19.5px;background:#ff9f33;box-sizing:border-box;border:1.5px solid #d9691c;border-radius:4px;"></div>
<div class="t " style="left:1412.6px;top:535.17px;font-size:16.6px;line-height:16.6px;color:#1b2030;">04. Team Enablement</div>
<div class="r" style="left:1383.8px;top:575.15px;width:118.70000000000005px;height:19.5px;background:#68cb62;box-sizing:border-box;border:1.5px solid #2f9a3a;border-radius:4px;"></div>
<div class="t " style="left:1510px;top:577.85px;font-size:16.6px;line-height:16.6px;color:#1b2030;">05. Results Analysis</div>
<svg class="r" style="left:1513px;top:615px;" width="26" height="26" viewBox="0 0 26 26"><rect x="5.5" y="5.5" width="15" height="15" rx="2.5" transform="rotate(45 13 13)" fill="#ffdc6b" stroke="#d5a92b" stroke-width="1.5"/></svg>
<div class="t " style="left:1545px;top:620.52px;font-size:16.6px;line-height:16.6px;color:#1b2030;">06. GA Launch <span style="font-size:11px;position:relative;top:-2px">&bull;</span> Lisa S.</div>
<svg class="r" style="left:1246.5px;top:660.75px;" width="16" height="16" viewBox="0 0 16 16"><rect x="1.2" y="2.6" width="12.6" height="12" rx="1.6" fill="none" stroke="#4f5970" stroke-width="1.5"/><rect x="1.2" y="2.6" width="12.6" height="3.4" rx="1" fill="#4f5970"/><line x1="4.3" y1="0.8" x2="4.3" y2="3" stroke="#4f5970" stroke-width="1.4"/><line x1="10.7" y1="0.8" x2="10.7" y2="3" stroke="#4f5970" stroke-width="1.4"/></svg>
<div class="t " style="left:1269.2px;top:662.45px;font-size:16.3px;line-height:16.3px;color:#4f5970;letter-spacing:0.2px;">External Communication</div>
<div class="r" style="left:1216px;top:627px;width:15.5px;height:42.7px;background:#8e9cb6;border-radius:0 6px 6px 0;"></div>
<svg class="r" style="left:1216px;top:640px;" width="15" height="16" viewBox="0 0 15 16"><polyline points="9.5,3.5 5.5,8 9.5,12.5" fill="none" stroke="#fff" stroke-width="1.4" stroke-linecap="round" stroke-linejoin="round"/></svg>
<div class="t " style="right:47.700000000000045px;top:709.26px;font-size:16px;line-height:16px;color:#1b2030;font-weight:700;letter-spacing:0.3px;">Step 1: Quick Start Guide</div>
<svg class="r" style="left:1758px;top:709px;" width="20" height="16" viewBox="0 0 20 16"><path d="M2.5 3 L2.5 13.5 L17.5 13.5 L17.5 5.5 L9 5.5 L7.5 3 Z" fill="none" stroke="#1b2030" stroke-width="1.4" stroke-linejoin="round"/></svg>
<div class="r" style="left:1779px;top:719px;width:14px;height:1.5px;background:#4b5570;"></div>
<svg class="r" style="left:1782px;top:749px;" width="14" height="14" viewBox="0 0 14 14"><polygon points="1.4,1.7 11.5,7 1.4,12.3" fill="#4b5570"/></svg>
<div class="r" style="left:1216px;top:760px;width:584px;height:318px;overflow:hidden">
<div class="t" style="right:36.8px;top:30.31px;font-size:16.5px;line-height:16.5px;color:#4f5970;letter-spacing:0.24px">Review with Digital Team</div>
<svg class="r" style="left:553.5px;top:29.774999999999977px;" width="16" height="16" viewBox="0 0 16 16"><rect x="1.2" y="2.6" width="12.6" height="12" rx="1.6" fill="none" stroke="#4f5970" stroke-width="1.5"/><rect x="1.2" y="2.6" width="12.6" height="3.4" rx="1" fill="#4f5970"/><line x1="4.3" y1="0.8" x2="4.3" y2="3" stroke="#4f5970" stroke-width="1.4"/><line x1="10.7" y1="0.8" x2="10.7" y2="3" stroke="#4f5970" stroke-width="1.4"/></svg>
<div class="t" style="right:36.8px;top:72.98px;font-size:16.5px;line-height:16.5px;color:#4f5970;letter-spacing:0.24px"><span style="display:inline-block;position:relative;width:20px;height:1px;margin-right:6.5px"><svg width="20" height="20" viewBox="0 0 20 20" style="position:absolute;left:0;top:-15.5px"><path d="M0.5 6.5 Q0.5 1 10 1 Q19.5 1 19.5 6.5 L19.5 7.6 L14.6 7.6 L14 5.4 L6 5.4 L5.4 7.6 L0.5 7.6 Z" fill="#cc1f2a"/><path d="M5.2 6.2 L14.8 6.2 L18.8 17.6 Q19 20 17 20 L3 20 Q1 20 1.2 17.6 Z" fill="#cc1f2a"/><rect x="6.2" y="9" width="1.8" height="1.6" fill="#fff"/><rect x="9.1" y="9" width="1.8" height="1.6" fill="#fff"/><rect x="12" y="9" width="1.8" height="1.6" fill="#fff"/><rect x="6.2" y="12" width="1.8" height="1.6" fill="#fff"/><rect x="9.1" y="12" width="1.8" height="1.6" fill="#fff"/><rect x="12" y="12" width="1.8" height="1.6" fill="#fff"/><rect x="6.2" y="15" width="1.8" height="1.6" fill="#fff"/><rect x="9.1" y="15" width="1.8" height="1.6" fill="#fff"/><rect x="12" y="15" width="1.8" height="1.6" fill="#fff"/></svg></span>Speak with a Marketing specialist if you want to learn more. <span style="font-size:11px;position:relative;top:-2px">&bull;</span> Julia H.</div>
<svg class="r" style="left:553.5px;top:72.44999999999993px;" width="16" height="16" viewBox="0 0 16 16"><rect x="1.2" y="2.6" width="12.6" height="12" rx="1.6" fill="none" stroke="#4f5970" stroke-width="1.5"/><rect x="1.2" y="2.6" width="12.6" height="3.4" rx="1" fill="#4f5970"/><line x1="4.3" y1="0.8" x2="4.3" y2="3" stroke="#4f5970" stroke-width="1.4"/><line x1="10.7" y1="0.8" x2="10.7" y2="3" stroke="#4f5970" stroke-width="1.4"/></svg>
<div class="t" style="right:36.8px;top:115.66px;font-size:16.5px;line-height:16.5px;color:#4f5970;letter-spacing:0.24px">Detailed instructions on how to use this template are here (10 min read) <span style="font-size:11px;position:relative;top:-2px">&bull;</span> Lisa S.</div>
<svg class="r" style="left:553.5px;top:115.125px;" width="16" height="16" viewBox="0 0 16 16"><rect x="1.2" y="2.6" width="12.6" height="12" rx="1.6" fill="none" stroke="#4f5970" stroke-width="1.5"/><rect x="1.2" y="2.6" width="12.6" height="3.4" rx="1" fill="#4f5970"/><line x1="4.3" y1="0.8" x2="4.3" y2="3" stroke="#4f5970" stroke-width="1.4"/><line x1="10.7" y1="0.8" x2="10.7" y2="3" stroke="#4f5970" stroke-width="1.4"/></svg>
<div class="t" style="right:36.8px;top:158.33px;font-size:16.5px;line-height:16.5px;color:#4f5970;letter-spacing:0.24px">Create a task, an initiative, or even a post...Drag it to the "Tried it" to show it's done. <span style="font-size:11px;position:relative;top:-2px">&bull;</span> Jason M.</div>
<svg class="r" style="left:553.5px;top:157.79999999999995px;" width="16" height="16" viewBox="0 0 16 16"><rect x="1.2" y="2.6" width="12.6" height="12" rx="1.6" fill="none" stroke="#4f5970" stroke-width="1.5"/><rect x="1.2" y="2.6" width="12.6" height="3.4" rx="1" fill="#4f5970"/><line x1="4.3" y1="0.8" x2="4.3" y2="3" stroke="#4f5970" stroke-width="1.4"/><line x1="10.7" y1="0.8" x2="10.7" y2="3" stroke="#4f5970" stroke-width="1.4"/></svg>
<div class="t" style="right:36.8px;top:201.01px;font-size:16.5px;line-height:16.5px;color:#4f5970;letter-spacing:0.24px">Keep track of tasks and get them done with our personal productivity board. Try it now. <span style="font-size:11px;position:relative;top:-2px">&bull;</span> David M.</div>
<svg class="r" style="left:553.5px;top:200.4749999999999px;" width="16" height="16" viewBox="0 0 16 16"><rect x="1.2" y="2.6" width="12.6" height="12" rx="1.6" fill="none" stroke="#4f5970" stroke-width="1.5"/><rect x="1.2" y="2.6" width="12.6" height="3.4" rx="1" fill="#4f5970"/><line x1="4.3" y1="0.8" x2="4.3" y2="3" stroke="#4f5970" stroke-width="1.4"/><line x1="10.7" y1="0.8" x2="10.7" y2="3" stroke="#4f5970" stroke-width="1.4"/></svg>
<div class="t" style="right:36.8px;top:243.68px;font-size:16.5px;line-height:16.5px;color:#4f5970;letter-spacing:0.24px">Never miss a deadline. Set realistic delivery dates with our Gantt. Try it now. <span style="font-size:11px;position:relative;top:-2px">&bull;</span> Jason M.</div>
<svg class="r" style="left:553.5px;top:243.14999999999998px;" width="16" height="16" viewBox="0 0 16 16"><rect x="1.2" y="2.6" width="12.6" height="12" rx="1.6" fill="none" stroke="#4f5970" stroke-width="1.5"/><rect x="1.2" y="2.6" width="12.6" height="3.4" rx="1" fill="#4f5970"/><line x1="4.3" y1="0.8" x2="4.3" y2="3" stroke="#4f5970" stroke-width="1.4"/><line x1="10.7" y1="0.8" x2="10.7" y2="3" stroke="#4f5970" stroke-width="1.4"/></svg>
<div class="t" style="right:36.8px;top:286.36px;font-size:16.5px;line-height:16.5px;color:#4f5970;letter-spacing:0.24px">Track team progress with custom views created just for you. Try it now. <span style="font-size:11px;position:relative;top:-2px">&bull;</span> Brandon R.</div>
<svg class="r" style="left:553.5px;top:285.8249999999998px;" width="16" height="16" viewBox="0 0 16 16"><rect x="1.2" y="2.6" width="12.6" height="12" rx="1.6" fill="none" stroke="#4f5970" stroke-width="1.5"/><rect x="1.2" y="2.6" width="12.6" height="3.4" rx="1" fill="#4f5970"/><line x1="4.3" y1="0.8" x2="4.3" y2="3" stroke="#4f5970" stroke-width="1.4"/><line x1="10.7" y1="0.8" x2="10.7" y2="3" stroke="#4f5970" stroke-width="1.4"/></svg>
</div>
<div class="r" style="left:1216px;top:172px;width:16px;height:906px;background:linear-gradient(to right, rgba(20,30,60,0.06), rgba(20,30,60,0));"></div>
<div class="r" style="left:341px;top:1040px;width:1459px;height:37px;background:linear-gradient(to bottom, rgba(228,230,234,0), rgba(228,230,234,1));mix-blend-mode:multiply;"></div>
<div class="r" style="left:0px;top:1077px;width:1800px;height:1px;background:#3c3c3c;"></div>
<div class="r" style="left:1790px;top:1068px;width:10px;height:10px;background:radial-gradient(circle at 0px 0px, transparent 9.5px, #1c1c1c 10.5px);"></div>
<div class="r" style="left:0;top:1070px;width:8px;height:8px;background:radial-gradient(circle at 8px 0px, transparent 7.5px, #1c1c1c 8.5px);"></div>
</body></html>
